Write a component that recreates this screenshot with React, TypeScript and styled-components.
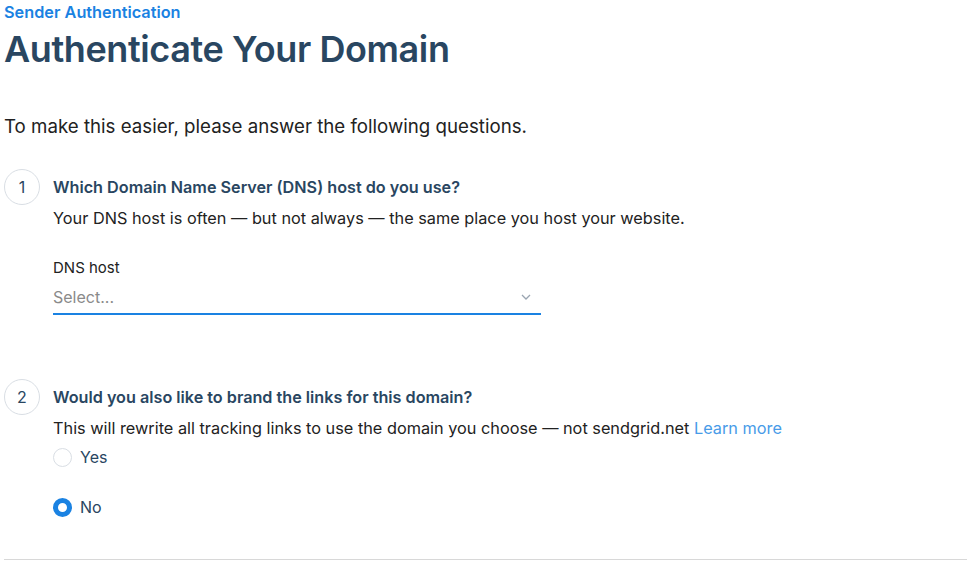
import React from "react";
import styled, { createGlobalStyle } from "styled-components";

const Global = createGlobalStyle`
  html, body { margin: 0; padding: 0; background: #fff; }
  body { font-family: Inter, "Noto Sans", sans-serif; -webkit-font-smoothing: antialiased; }
  * { box-sizing: border-box; }
`;

const Page = styled.div`
  padding: 2px 0 0 4px;
  display: flex;
  flex-direction: column;
`;

const Breadcrumb = styled.a`
  font-size: 16.3px;
  line-height: 20px;
  font-weight: 600;
  color: #1a82e2;
  text-decoration: none;
`;

const Title = styled.h1`
  margin: 4px 0 0;
  font-size: 36px;
  line-height: 46px;
  font-weight: 600;
  color: #294661;
  letter-spacing: -0.4px;
`;

const Intro = styled.p`
  margin: 42px 0 0;
  font-size: 18.7px;
  line-height: 26px;
  color: #222;
`;

const Step = styled.section<{ $top: number }>`
  display: grid;
  grid-template-columns: 36px 1fr;
  column-gap: 13px;
  align-items: start;
  margin-top: ${(p) => p.$top}px;
`;

const Num = styled.div`
  width: 36px;
  height: 36px;
  border-radius: 50%;
  border: 1px solid #d9dee4;
  display: flex;
  align-items: center;
  justify-content: center;
  font-size: 16px;
  color: #294661;
`;

const Body = styled.div`
  display: flex;
  flex-direction: column;
  padding-top: 8px;
`;

const Question = styled.h2`
  margin: 0;
  font-size: 16.2px;
  line-height: 20px;
  font-weight: 600;
  color: #294661;
`;

const Desc = styled.p`
  margin: 11px 0 0;
  font-size: 16.3px;
  line-height: 20px;
  color: #222;
`;

const Link = styled.a`
  color: #489be8;
  text-decoration: none;
`;

const Field = styled.div`
  margin-top: 31px;
  width: 488px;
  display: flex;
  flex-direction: column;
`;

const Label = styled.label`
  font-size: 15px;
  line-height: 18px;
  color: #222;
`;

const SelectBox = styled.div`
  margin-top: 8px;
  height: 30px;
  display: flex;
  align-items: center;
  justify-content: space-between;
  padding: 0 10px 4px 0;
  border-bottom: 2px solid #1a82e2;
`;

const Placeholder = styled.span`
  font-size: 16px;
  color: #8a8a8a;
`;

const Radios = styled.div`
  margin-top: 10px;
  display: flex;
  flex-direction: column;
  gap: 31px;
`;

const RadioRow = styled.label`
  display: flex;
  align-items: center;
  gap: 8px;
  font-size: 16px;
  line-height: 19px;
  color: #294661;
`;

const RadioDot = styled.span<{ $checked?: boolean }>`
  width: 19px;
  height: 19px;
  border-radius: 50%;
  border: ${(p) => (p.$checked ? "5.5px solid #1a82e2" : "1px solid #d9dee4")};
  background: #fff;
  flex: none;
`;

const Rule = styled.hr`
  margin: 42px 0 0;
  border: 0;
  border-top: 1px solid #d8d8d8;
  width: 100%;
`;

export default function App() {
  return (
    <>
      <Global />
      <Page>
        <Breadcrumb href="#">Sender Authentication</Breadcrumb>
        <Title>Authenticate Your Domain</Title>
        <Intro>To make this easier, please answer the following questions.</Intro>

        <Step $top={29}>
          <Num>1</Num>
          <Body>
            <Question>Which Domain Name Server (DNS) host do you use?</Question>
            <Desc>Your DNS host is often — but not always — the same place you host your website.</Desc>
            <Field>
              <Label>DNS host</Label>
              <SelectBox>
                <Placeholder>Select...</Placeholder>
                <svg width="10" height="6" viewBox="0 0 10 6" fill="none">
                  <path d="M1 1l4 4 4-4" stroke="#9aa5b1" strokeWidth="1.3" />
                </svg>
              </SelectBox>
            </Field>
          </Body>
        </Step>

        <Step $top={64}>
          <Num>2</Num>
          <Body>
            <Question>Would you also like to brand the links for this domain?</Question>
            <Desc>
              This will rewrite all tracking links to use the domain you choose — not sendgrid.net{" "}
              <Link href="#">Learn more</Link>
            </Desc>
            <Radios>
              <RadioRow>
                <RadioDot />
                Yes
              </RadioRow>
              <RadioRow>
                <RadioDot $checked />
                No
              </RadioRow>
            </Radios>
          </Body>
        </Step>

        <Rule />
      </Page>
    </>
  );
}
